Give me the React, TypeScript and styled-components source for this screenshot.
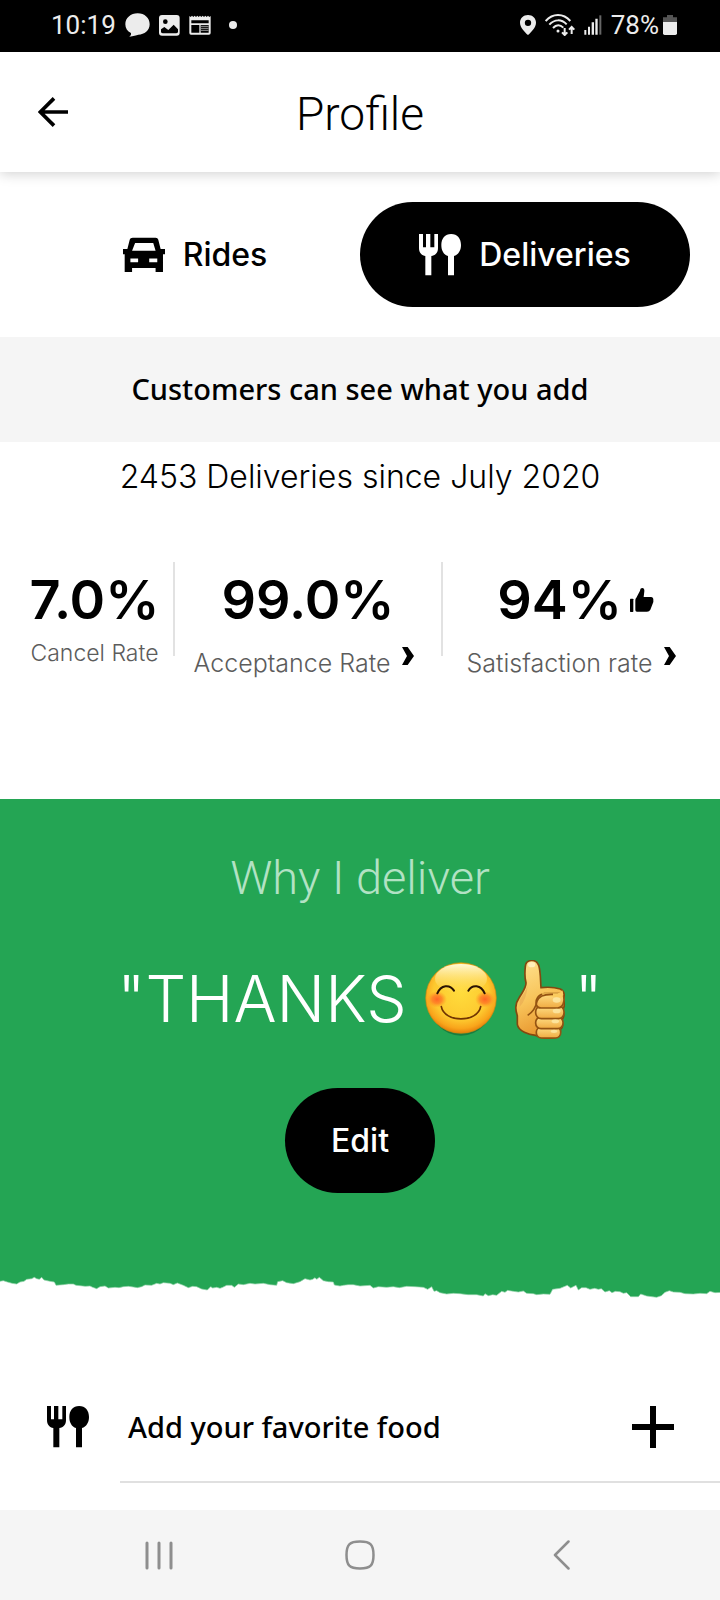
import React from "react";
import styled, { createGlobalStyle } from "styled-components";

const GlobalStyle = createGlobalStyle`
  * { box-sizing: border-box; }
  body {
    margin: 0;
    background: #fff;
    color: #000;
    font-family: Inter, "Liberation Sans", sans-serif;
  }
  h1, h2, p, dl, dt, dd, ul { margin: 0; padding: 0; }
  button { border: 0; padding: 0; background: none; color: inherit; font: inherit; cursor: pointer; }
  svg { display: block; flex: none; }
`;

const Page = styled.div`
  min-height: 100vh;
  display: flex;
  flex-direction: column;
`;

const StatusBar = styled.div`
  height: 52px;
  padding: 0 43px 2px 51px;
  display: flex;
  align-items: center;
  justify-content: space-between;
  background: #000;
  color: #ececec;
  font: 400 26px/32px Roboto, sans-serif;
`;

const StatusGroup = styled.div<{ $gap: number }>`
  display: flex;
  align-items: center;
  gap: ${(p) => p.$gap}px;
`;

const Dot = styled.span`
  width: 8px;
  height: 8px;
  margin-left: 9px;
  border-radius: 50%;
  background: #ececec;
`;

const Header = styled.header`
  height: 120px;
  padding: 0 38px;
  display: grid;
  grid-template-columns: 1fr auto 1fr;
  align-items: center;
  position: relative;
  background: #fff;
  box-shadow: 0 2px 12px rgba(0, 0, 0, 0.18);
`;

const BackButton = styled.button`
  justify-self: start;
`;

const Title = styled.h1`
  padding-top: 4px;
  font: 350 46px/52px Roboto, sans-serif;
`;

const Tabs = styled.div`
  padding: 30px;
  display: grid;
  grid-template-columns: 1fr 1fr;
`;

const Tab = styled.button<{ $active?: boolean }>`
  height: 105px;
  border-radius: 53px;
  display: flex;
  align-items: center;
  justify-content: center;
  gap: 18px;
  background: ${(p) => (p.$active ? "#000" : "transparent")};
  color: ${(p) => (p.$active ? "#fff" : "#000")};
  font-size: 32px;
  font-weight: 500;
  line-height: 40px;
`;

const Banner = styled.p`
  padding: 32px 0 33px;
  background: #f5f5f5;
  text-align: center;
  font: 500 29px/40px "Noto Sans", sans-serif;
`;

const Summary = styled.h2`
  padding-top: 15px;
  text-align: center;
  font-size: 32px;
  font-weight: 350;
  line-height: 40px;
`;

const Stats = styled.dl`
  padding: 65px 0 0;
  height: 302px;
  display: grid;
  grid-template-columns: 173fr 2px 266fr 2px 277fr;
  align-items: start;
`;

const Divider = styled.div`
  height: 94px;
  background: #e2e2e2;
`;

const Stat = styled.div<{ $left?: number; $right?: number }>`
  padding: 8px ${(p) => p.$right || 0}px 0 ${(p) => p.$left || 0}px;
  display: flex;
  flex-direction: column-reverse;
  justify-content: flex-end;
  align-items: center;
`;

const StatValue = styled.dd`
  height: 60px;
  display: flex;
  align-items: center;
  gap: 8px;
  font-size: 54px;
  font-weight: 600;
  line-height: 60px;
`;

const StatLabel = styled.dt<{ $small?: boolean }>`
  padding: ${(p) => (p.$small ? "7px 0 0" : "17px 8px 0 0")};
  display: flex;
  gap: 12px;
  color: #5c5c5c;
  font-size: ${(p) => (p.$small ? 23 : 25)}px;
  font-weight: 350;
  line-height: 32px;
  white-space: nowrap;
`;

const Why = styled.section`
  padding-top: 53px;
  display: flex;
  flex-direction: column;
  align-items: center;
  background: #24a554;
`;

const WhyTitle = styled.h2`
  color: #b2e2c4;
  font: 350 47px/52px Roboto, sans-serif;
`;

const Quote = styled.p`
  padding-top: 53px;
  display: flex;
  align-items: center;
  gap: 18px;
  color: #fff;
  font-size: 64px;
  font-weight: 350;
  line-height: 84px;
`;

const QuoteEnd = styled.span`
  margin-left: -8px;
`;

const EditButton = styled.button`
  width: 150px;
  height: 105px;
  margin: 47px 0 77px;
  border-radius: 53px;
  background: #000;
  color: #fff;
  font-size: 32px;
  font-weight: 500;
`;

const Torn = styled.svg`
  width: 100%;
  height: 30px;
  background: #fff;
`;

const FoodRow = styled.section`
  margin-top: 81px;
  padding-left: 47px;
  display: flex;
`;

const FoodIcon = styled.div`
  width: 73px;
  padding-top: 25px;
`;

const FoodBody = styled.div`
  flex: 1;
  height: 102px;
  padding: 0 46px 8px 8px;
  display: flex;
  align-items: center;
  justify-content: space-between;
  border-bottom: 2px solid #e0e0e0;
  font: 500 29px/40px "Noto Sans", sans-serif;
`;

const NavBar = styled.nav`
  height: 90px;
  margin-top: auto;
  padding: 0 58px;
  display: flex;
  background: #f5f5f5;
`;

const NavButton = styled.button`
  flex: 1;
  display: flex;
  align-items: center;
  justify-content: center;
`;

const Cutlery = () => (
  <svg width="42" height="42" viewBox="0 0 126 126" fill="currentColor" aria-hidden="true">
    <path d="M0 0H12V40H21V0H34V40H46V0H57V42C57 56 49 65 37 66V124H19V66C8 65 0 56 0 42Z" />
    <path d="M96.500 0C115 0 126 14 126 33C126 50 118 62 105 66V124H87V66C74 62 67 50 67 33C67 14 78 0 96.500 0Z" />
  </svg>
);

const Car = () => (
  <svg width="42" height="35" viewBox="0 0 125 104" fill="currentColor" fillRule="evenodd" aria-hidden="true">
    <path d="M29 2H97C101 2 104 4 105 8L112 36H125V51H119V104H97V92H27V104H5V51H0V36H13L20 8C21 4 24 2 29 2ZM36 18L27 41H97L90 18ZM22 64V75H45V64ZM78 64V75H102V64Z" />
  </svg>
);

const BackArrow = () => (
  <svg width="30" height="30" viewBox="0 0 90 90" fill="none" stroke="#000" strokeWidth="11" aria-hidden="true">
    <path d="M48 4L7 45L48 86M7 45H90" />
  </svg>
);

const Chevron = () => (
  <svg width="12" height="18" viewBox="0 0 36 54" aria-hidden="true">
    <path d="M0 0H17L36 27L17 54H0L15 27Z" />
  </svg>
);

const ThumbIcon = () => (
  <svg width="24" height="24" viewBox="0 0 72 72" aria-hidden="true">
    <rect x="0" y="32" width="10" height="40" rx="2" />
    <path d="M16 66V36Q16 32 19 29L30 8C31 2 33 0 37 0Q44 1 43 10L41 27H63Q71 28 70 37V42L61 65Q58 71 51 71H21Q16 71 16 66Z" />
  </svg>
);

const Plus = () => (
  <svg width="42" height="42" viewBox="0 0 42 42" aria-hidden="true">
    <path d="M18 0H24V18H42V24H24V42H18V24H0V18H18Z" />
  </svg>
);

const Bubble = () => (
  <svg width="25" height="24" viewBox="0 0 75 72" fill="#ececec" aria-hidden="true">
    <path d="M38 1C59 1 74 15 74 34S58 65 40 65C34 66 25 70 13 71Q20 66 18 60C7 55 1 46 1 34C1 15 17 1 38 1Z" />
  </svg>
);

const Picture = () => (
  <svg width="21" height="21" viewBox="0 0 63 63" aria-hidden="true">
    <rect width="62" height="62" rx="9" fill="#ececec" />
    <circle cx="19" cy="20" r="7" fill="#000" />
    <path d="M6 43L16 36L28 45L44 29L57 43V51Q56 55 51 55H12Q7 55 6 51Z" fill="#000" />
  </svg>
);

const News = () => (
  <svg width="22" height="20" viewBox="0 0 66 60" aria-hidden="true">
    <path d="M1 3L5 6L9 2L13 6L17 2L21 6L25 2L29 6L33 2L37 6L41 2L45 6L49 2L53 6L57 2L61 6L65 3V54Q65 59 60 59H6Q1 59 1 54Z" fill="#ececec" />
    <path d="M7 16H59V25H7ZM7 30H31V53H7ZM35 30H59V53H35Z" fill="#000" />
    <path d="M35 34H59M35 40H59M35 46H59" stroke="#999" strokeWidth="3" />
  </svg>
);

const Pin = () => (
  <svg width="16" height="20" viewBox="0 0 48 60" aria-hidden="true">
    <path fillRule="evenodd" fill="#ececec" d="M24 0C38 0 48 10 48 23C48 37 34 51 24 60C14 51 0 37 0 23C0 10 10 0 24 0ZM24 14A9 9 0 1 0 24 33A9 9 0 1 0 24 14Z" />
  </svg>
);

const Wifi = () => (
  <svg width="30" height="22" viewBox="0 0 90 66" fill="none" stroke="#ececec" strokeWidth="6" aria-hidden="true">
    <path d="M2 21C23 -3 55 -3 76 21M13 32C29 15 49 15 65 31M24 42C34 31 45 31 55 41" />
    <circle cx="39" cy="51" r="4.500" fill="#ececec" stroke="none" />
    <path d="M59 42V62M51 55L59 63L67 55M80 60V40M72 47L80 39L88 47" />
  </svg>
);

const Signal = () => (
  <svg width="18" height="20" viewBox="0 0 54 60" aria-hidden="true">
    <path fill="#ececec" d="M1 45H7V59H1ZM12 35H18V59H12ZM23 22H30V59H23ZM34 11H41V59H34Z" />
    <path fill="#666" d="M46 1H52V59H46Z" />
  </svg>
);

const Battery = () => (
  <svg width="14" height="20" viewBox="0 0 42 60" aria-hidden="true">
    <path fill="#555" d="M12 0H30V7H42V22H0V7H12Z" />
    <path fill="#ececec" d="M0 21H42V55Q42 60 37 60H5Q0 60 0 55Z" />
  </svg>
);

const Smiley = () => (
  <svg width="72" height="74" viewBox="0 0 216 222" role="img" aria-label="smiling face">
    <defs>
      <radialGradient id="face" cx="0.5" cy="0.42" r="0.6">
        <stop offset="0" stopColor="#ffdc3c" />
        <stop offset="0.65" stopColor="#fdc92f" />
        <stop offset="0.85" stopColor="#f9a51b" />
        <stop offset="1" stopColor="#e07404" />
      </radialGradient>
      <linearGradient id="shine" x1="0" y1="0" x2="0" y2="1">
        <stop offset="0" stopColor="#fff9d8" />
        <stop offset="1" stopColor="#ffe168" stopOpacity="0" />
      </linearGradient>
      <radialGradient id="cheek">
        <stop offset="0" stopColor="#ff6426" />
        <stop offset="0.5" stopColor="#ff7a26" stopOpacity="0.8" />
        <stop offset="1" stopColor="#ff9a20" stopOpacity="0" />
      </radialGradient>
    </defs>
    <ellipse cx="108" cy="115" rx="98" ry="106" fill="#176b36" opacity="0.7" />
    <circle cx="108" cy="108" r="106" fill="url(#face)" stroke="#c98a12" strokeWidth="2" />
    <ellipse cx="108" cy="50" rx="78" ry="44" fill="url(#shine)" />
    <ellipse cx="36" cy="112" rx="30" ry="25" fill="url(#cheek)" />
    <ellipse cx="180" cy="112" rx="30" ry="25" fill="url(#cheek)" />
    <g fill="none" strokeLinecap="round">
      <path d="M37 94C48 68 74 66 87 86M130 86C142 66 168 68 179 94" stroke="#2a1203" strokeWidth="6" />
      <path d="M49 134C58 183 158 183 167 134" stroke="#713402" strokeWidth="5" />
    </g>
  </svg>
);

const ThumbEmoji = () => (
  <svg width="50" height="79" viewBox="0 0 150 237" role="img" aria-label="thumbs up">
    <defs>
      <linearGradient id="skin" x1="0" y1="0" x2="0.3" y2="1">
        <stop offset="0" stopColor="#ffe391" />
        <stop offset="0.55" stopColor="#f8c45a" />
        <stop offset="1" stopColor="#e8962e" />
      </linearGradient>
      <linearGradient id="finger" x1="0" y1="0" x2="0" y2="1">
        <stop offset="0" stopColor="#ffde85" />
        <stop offset="1" stopColor="#f0ab42" />
      </linearGradient>
    </defs>
    <path
      d="M31 20C32 -2 62 -6 71 16C77 34 76 58 78 83C94 81 120 82 136 87C151 94 149 112 143 117C152 128 148 145 142 149C151 164 145 176 139 180C145 194 142 205 136 209C139 226 124 235 108 234C92 236 72 232 62 226C42 224 10 214 7 193V167C0 148 2 128 12 114C22 96 34 84 33 68C29 54 29 38 31 20Z"
      fill="url(#skin)"
      stroke="#85480f"
      strokeWidth="5"
    />
    <path d="M14 119Q32 95 38 77Q34 120 14 140Z" fill="#dc944b" opacity="0.35" />
    <g fill="url(#finger)" stroke="#945312" strokeWidth="5">
      <rect x="64" y="201" width="73" height="33" rx="15" />
      <rect x="62" y="171" width="82" height="35" rx="16" />
      <rect x="62" y="138" width="85" height="38" rx="17" />
      <path d="M65 137C59 118 70 104 88 101H138Q150 110 146 126Q143 143 128 144H78Q68 144 65 137Z" />
    </g>
    <path d="M79 100H128Q139 98 141 90Q147 100 142 114L84 106Z" fill="#fbcb5e" />
    <path d="M38 166C55 155 63 140 66 124C72 105 90 102 114 103" fill="none" stroke="#945312" strokeWidth="5" />
    <ellipse cx="50" cy="14" rx="11" ry="8" fill="#fff4c8" opacity="0.8" />
    <g fill="#ffefb0" opacity="0.7">
      <ellipse cx="125" cy="120" rx="12" ry="8" />
      <ellipse cx="125" cy="153" rx="12" ry="7" />
      <ellipse cx="121" cy="184" rx="11" ry="6" />
      <ellipse cx="117" cy="214" rx="10" ry="5" />
    </g>
  </svg>
);

const TornEdge = () => (
  <Torn viewBox="0 30 2160 90" preserveAspectRatio="none" aria-hidden="true">
    <path
      fill="#24a554"
      stroke="#8fd1a8"
      strokeWidth="2"
      d="M-5 20L-5 65L10 62L22 66L36 70L50 72L60 66L72 64L80 58L95 56L103 52L110 56L118 58L125 52L132 60L150 64L163 66L168 76L190 74L205 72L220 72L228 76L240 77L256 79L270 78L278 82L290 86L300 80L315 78L325 84L345 82L357 83L370 80L385 79L400 81L412 83L425 80L435 75L455 76L470 70L480 72L490 68L510 70L520 74L532 69L550 76L565 83L578 79L590 80L605 87L622 90L632 80L638 84L650 82L660 85L668 82L680 76L695 76L703 82L715 72L730 74L750 70L765 72L790 70L810 74L830 76L833 65L848 62L860 68L880 71L900 65L915 56L930 60L938 58L945 53L950 58L958 52L970 62L985 65L1000 66L1003 75L1020 78L1030 76L1045 74L1060 74L1080 78L1110 76L1120 84L1135 80L1160 82L1180 80L1198 83L1220 79L1245 80L1270 82L1283 88L1295 80L1302 94L1310 92L1320 98L1340 102L1360 100L1380 101L1404 104L1430 104L1450 108L1455 101L1465 107L1478 104L1490 106L1505 94L1515 97L1523 91L1540 94L1555 96L1570 93L1580 100L1600 101L1610 104L1630 102L1650 103L1658 88L1680 85L1702 76L1712 84L1728 76L1735 90L1745 83L1758 83L1770 88L1784 85L1795 88L1804 86L1815 96L1828 92L1836 98L1846 94L1860 95L1870 100L1880 98L1892 110L1915 110L1922 102L1940 108L1970 112L1984 107L1995 97L2008 92L2020 96L2040 97L2055 101L2080 102L2100 100L2120 101L2130 94L2145 98L2165 97V20Z"
    />
  </Torn>
);

export default function App() {
  return (
    <Page>
      <GlobalStyle />
      <StatusBar>
        <StatusGroup $gap={9}>
          <span>10:19</span>
          <Bubble />
          <Picture />
          <News />
          <Dot />
        </StatusGroup>
        <StatusGroup $gap={9}>
          <Pin />
          <Wifi />
          <Signal />
          <StatusGroup $gap={4}>
            <span>78%</span>
            <Battery />
          </StatusGroup>
        </StatusGroup>
      </StatusBar>

      <Header>
        <BackButton type="button" aria-label="Back">
          <BackArrow />
        </BackButton>
        <Title>Profile</Title>
      </Header>

      <main>
        <Tabs>
          <Tab type="button">
            <Car />
            Rides
          </Tab>
          <Tab type="button" $active aria-pressed="true">
            <Cutlery />
            Deliveries
          </Tab>
        </Tabs>
        <Banner>Customers can see what you add</Banner>
        <Summary>2453 Deliveries since July 2020</Summary>

        <Stats>
          <Stat $left={16}>
            <StatLabel $small>Cancel Rate</StatLabel>
            <StatValue>7.0%</StatValue>
          </Stat>
          <Divider />
          <Stat>
            <StatLabel>
              Acceptance Rate
              <Chevron />
            </StatLabel>
            <StatValue>99.0%</StatValue>
          </Stat>
          <Divider />
          <Stat $right={12}>
            <StatLabel>
              Satisfaction rate
              <Chevron />
            </StatLabel>
            <StatValue>
              94%
              <ThumbIcon />
            </StatValue>
          </Stat>
        </Stats>

        <Why>
          <WhyTitle>Why I deliver</WhyTitle>
          <Quote>
            <span>"THANKS</span>
            <Smiley />
            <ThumbEmoji />
            <QuoteEnd>"</QuoteEnd>
          </Quote>
          <EditButton type="button">Edit</EditButton>
          <TornEdge />
        </Why>

        <FoodRow>
          <FoodIcon>
            <Cutlery />
          </FoodIcon>
          <FoodBody>
            <span>Add your favorite food</span>
            <button type="button" aria-label="Add your favorite food">
              <Plus />
            </button>
          </FoodBody>
        </FoodRow>
      </main>

      <NavBar>
        <NavButton type="button" aria-label="Recent apps">
          <svg width="28" height="29" viewBox="0 0 28 29" fill="none" stroke="#8e8e8e" strokeWidth="3" strokeLinecap="round">
            <path d="M2 2V27M14 2V27M26 2V27" />
          </svg>
        </NavButton>
        <NavButton type="button" aria-label="Home">
          <svg width="30" height="30" viewBox="0 0 30 30" fill="none" stroke="#8e8e8e" strokeWidth="2.500">
            <path d="M15 1.500C25.500 1.500 28.500 4.500 28.500 15S25.500 28.500 15 28.500S1.500 25.500 1.500 15S4.500 1.500 15 1.500Z" />
          </svg>
        </NavButton>
        <NavButton type="button" aria-label="Go back">
          <svg width="17" height="30" viewBox="0 0 17 30" fill="none" stroke="#8e8e8e" strokeWidth="2.500" strokeLinecap="round" strokeLinejoin="round">
            <path d="M15.500 1.500L2 15L15.500 28.500" />
          </svg>
        </NavButton>
      </NavBar>
    </Page>
  );
}
